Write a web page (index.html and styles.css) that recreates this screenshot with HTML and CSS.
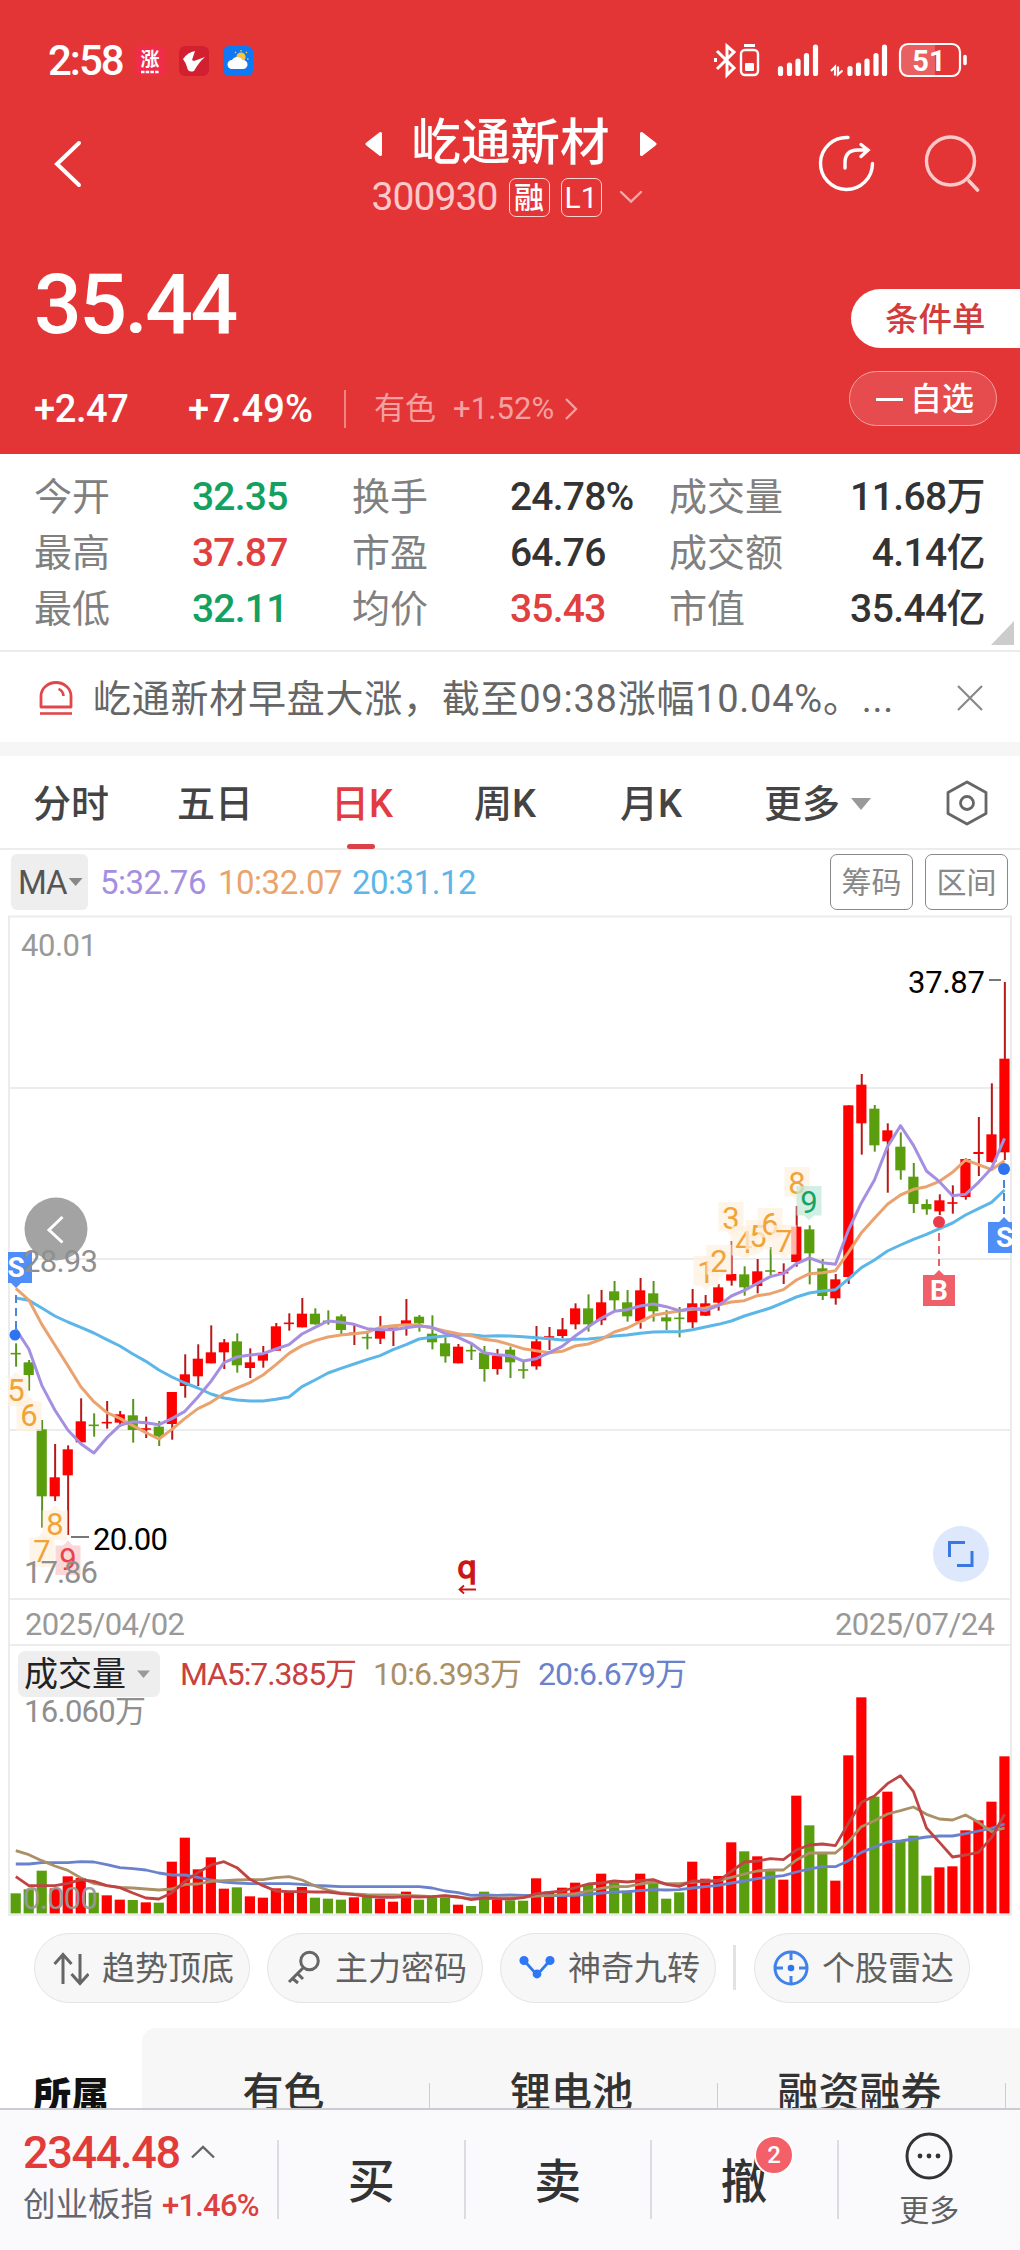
FILE: index.html
```html
<!DOCTYPE html>
<html lang="zh-CN">
<head>
<meta charset="utf-8">
<title>屹通新材 300930</title>
<link rel="stylesheet" href="styles.css">
</head>
<body>
<header class="hero">
  <div class="status">
    <span class="clock">2:58</span>
    <svg class="apps" width="120" height="32" viewBox="134 44 120 32">
      <rect x="135" y="45" width="30" height="30" rx="6" fill="#f02c48"/>
      <text x="150" y="65" font-size="19" font-weight="700" text-anchor="middle" fill="#fff">涨</text>
      <path d="M141 71h18" stroke="#fff" stroke-width="2.4" stroke-dasharray="3.5 1.2"/>
      <rect x="179" y="45" width="30" height="30" rx="6" fill="#d32030"/>
      <path d="M183 58q5-7 12-8l-3 9 2 1 11-4q-6 5-11 14-6 2-7-4-1-4-4-8z" fill="#fff"/>
      <rect x="223" y="45" width="30" height="30" rx="6" fill="#0f79f5"/>
      <circle cx="241" cy="56" r="4.6" fill="#f6c544"/>
      <path d="M241 49v1.5M247 51l-1 1M235 51l1 1M247 58h1.500" stroke="#f6c544" stroke-width="1.4"/>
      <path d="M232 68a4.500 4.500 0 0 1 0-9 6 6 0 0 1 10.500 0 4.500 4.500 0 0 1 1 9z" fill="#fff"/>
    </svg>
    <svg class="signals" width="254" height="38" viewBox="714 41 254 38" fill="none" stroke="#fff">
      <path d="M717 50l17 17-7 7V45l7 6-17 17M715.500 57v4" stroke-width="3"/>
      <path d="M744 44.500h11" stroke-width="3"/>
      <rect x="741" y="49" width="17" height="25" rx="4" stroke-width="2.4"/>
      <rect x="745" y="62" width="9" height="8" rx="1" fill="#fff" stroke="none"/>
      <path stroke-width="5.200" stroke-linecap="round" d="M780.500 67.500v5M789.500 64v8.500M798 60v12.500M806.500 54.500v18M815.500 46v26.500M850 67.500v5M858.500 64v8.500M867 60v12.500M876 54.500v18M884.500 46v26.500"/>
      <path d="M831 70l4-4v8.500M838 65.500v8l4.500-4" stroke-width="2.200"/>
      <path d="M908 43h27v32h-27a8 8 0 0 1-8-8V51a8 8 0 0 1 8-8z" fill="#ea6061" stroke="none"/>
      <rect x="900" y="43" width="60" height="32" rx="8" stroke-width="2.200"/>
      <path d="M965 55.500v7" stroke-width="3.600" stroke-linecap="round"/>
      <text x="929" y="69.500" font-size="29" font-weight="700" text-anchor="middle" fill="#fff" stroke="none">51</text>
    </svg>
  </div>

  <div class="nav">
    <svg class="back" width="30" height="50" viewBox="53 139 30 50"><path d="M79 143L57 164l22 21" fill="none" stroke="#fff" stroke-width="4" stroke-linecap="round"/></svg>
    <div class="title">
      <div class="name">
        <svg width="18" height="26" viewBox="0 0 18 26"><path d="M15.500 2.500v21L2 13z" fill="#fff" stroke="#fff" stroke-width="3" stroke-linejoin="round"/></svg>
        <h1>屹通新材</h1>
        <svg width="18" height="26" viewBox="0 0 18 26"><path d="M2.500 2.500v21L16 13z" fill="#fff" stroke="#fff" stroke-width="3" stroke-linejoin="round"/></svg>
      </div>
      <div class="code">
        <span class="num">300930</span><span class="tag">融</span><span class="tag">L1</span>
        <svg width="24" height="14" viewBox="0 0 24 14"><path d="M2 2l10 9.500L22 2" fill="none" stroke="#f7a9a9" stroke-width="2.400" stroke-linecap="round"/></svg>
      </div>
    </div>
    <svg class="actions" width="162" height="60" viewBox="818 134 162 60" fill="none" stroke-linecap="round">
      <path d="M848 137.500a26 26 0 1 0 24.500 26" stroke="#fff" stroke-width="3.400"/>
      <path d="M845 168v-5q0-13 13-13h9M861 144.500l7 5.500-7 6.500" stroke="#fff" stroke-width="3.400"/>
      <circle cx="950.500" cy="161" r="24" stroke="#fbc9c9" stroke-width="3.400"/><path d="M969 181l8.500 9" stroke="#fbc9c9" stroke-width="3.600"/>
    </svg>
  </div>

  <div class="quote">
    <span class="price">35.44</span>
    <span class="cond">条件单</span>
  </div>
  <div class="change">
    <span class="diff">+2.47</span><span class="pct">+7.49%</span>
    <span class="sector">有色 <b>+1.52%</b>
      <svg width="14" height="24" viewBox="0 0 14 24"><path d="M2 2l10 10L2 22" fill="none" stroke="#f3a0a0" stroke-width="2.400"/></svg>
    </span>
    <span class="watch"><i></i>自选</span>
  </div>
</header>

<section class="stats">
  <span class="k">今开</span><span class="v down">32.35</span><span class="k">换手</span><span class="v">24.78%</span><span class="k">成交量</span><span class="v end">11.68万</span>
  <span class="k">最高</span><span class="v up">37.87</span><span class="k">市盈</span><span class="v">64.76</span><span class="k">成交额</span><span class="v end">4.14亿</span>
  <span class="k">最低</span><span class="v down">32.11</span><span class="k">均价</span><span class="v up">35.43</span><span class="k">市值</span><span class="v end">35.44亿</span>
  <i class="corner"></i>
</section>

<section class="news">
  <svg width="34" height="36" viewBox="0 0 34 36" fill="none" stroke="#e2464c"><path d="M2 27V16a15 13.500 0 0 1 30 0v11z" stroke-width="2.800" stroke-linejoin="round"/><path d="M19.500 9q4.500 1.500 5 7" stroke-width="2.600"/><path d="M1 33.500h32" stroke-width="2.600"/></svg>
  <p>屹通新材早盘大涨，截至09:38涨幅10.04%。...</p>
  <svg class="close" width="26" height="26" viewBox="0 0 26 26"><path d="M1 1l24 24M25 1L1 25" stroke="#888" stroke-width="2.200"/></svg>
</section>

<nav class="tabs">
  <a>分时</a><a>五日</a><a class="on">日K</a><a>周K</a><a>月K</a><a>更多<i></i></a>
  <svg width="44" height="46" viewBox="0 0 44 46" fill="none" stroke="#666" stroke-width="2.800"><path d="M22 2l19 10.500v21L22 44 3 33.500v-21z" stroke-linejoin="round"/><circle cx="22" cy="23" r="6.500"/></svg>
</nav>

<div class="ma">
  <span class="pill">MA<i></i></span>
  <span class="m5">5:32.76</span><span class="m10">10:32.07</span><span class="m20">20:31.12</span>
  <span class="btn">筹码</span><span class="btn">区间</span>
</div>

<svg class="chart" width="1020" height="1010" viewBox="0 914 1020 1010">
  <defs><clipPath id="frame"><rect x="8" y="914" width="1004" height="1002"/></clipPath></defs>
  <g fill="none" stroke="#ececec" stroke-width="2">
    <path d="M9 1915V916.500H1011V1915z"/>
    <path d="M9 1088H1011M9 1259H1011M9 1430H1011M9 1599H1011M9 1645H1011"/>
  </g>
  <g id="candles"></g>
  <g id="volume"></g>

  <g class="axis">
    <text x="21" y="956" textLength="76">40.01</text>
    <text x="25" y="1634.500" textLength="160">2025/04/02</text>
    <text x="835" y="1634.500" textLength="160">2025/07/24</text>
  </g>
  <g id="counts" clip-path="url(#frame)"></g>

  <circle cx="56" cy="1229" r="31.500" fill="#a3a3a3"/>
  <path d="M62.500 1217L49 1230l13.500 12.500" fill="none" stroke="#fff" stroke-width="3"/>

  <g clip-path="url(#frame)" class="mark">
    <path d="M16 1295v36M1004 1180v34" stroke="#4a86d8" stroke-width="2" stroke-dasharray="8 5"/>
    <path d="M939 1233v33" stroke="#e8606a" stroke-width="2" stroke-dasharray="8 5"/>
    <circle cx="15" cy="1335" r="5.500" fill="#2e74f0"/><circle cx="1004" cy="1169" r="6" fill="#2e74f0"/><circle cx="939" cy="1222" r="6" fill="#ea3b48"/>
    <path d="M0 1252h32v31H21l-5 5-5-5H0z" fill="#4f8df7"/>
    <path d="M988 1222h11l5-5 5 5h10v31h-31z" fill="#4f8df7"/>
    <path d="M923 1275h11l5-5 5 5h11v31h-32z" fill="#f0606b"/>
    <text x="16" y="1277">S</text><text x="1004.500" y="1247">S</text><text x="939" y="1300">B</text>
  </g>
  <g class="axis over">
    <text x="23" y="1272" textLength="75">28.93</text>
    <text x="24" y="1583" textLength="74">17.86</text>
    <text x="24" y="1722" textLength="122">16.060万</text>
  </g>
  <g class="peak"><text x="908" y="993" textLength="77">37.87</text><text x="93" y="1550" textLength="75">20.00</text></g>
  <path d="M989 980h12M71 1537h18" stroke="#777" stroke-width="2"/>
  <text x="467" y="1578" class="ex">q</text>
  <path d="M476 1589.500h-16M464 1585.500l-4.500 4 4.500 4" fill="none" stroke="#cc1616" stroke-width="1.800"/>
  <circle cx="961" cy="1554" r="28" fill="#dde8fc"/>
  <path d="M949.500 1557v-14.500H965M972 1551v14.500h-15" fill="none" stroke="#3a78e0" stroke-width="3"/>

  <rect x="18" y="1651" width="142" height="46" rx="7" fill="#eee"/>
  <text x="24" y="1685.500" font-size="34" fill="#222">成交量</text>
  <path d="M137 1670.500h13l-6.500 7.500z" fill="#999"/>
  <g class="vol">
    <text x="180" y="1685" textLength="177" fill="#c8413f">MA5:7.385万</text>
    <text x="373" y="1685" textLength="149" fill="#ab8f66">10:6.393万</text>
    <text x="538" y="1685" textLength="149" fill="#6a82cc">20:6.679万</text>
  </g>
  <text x="23" y="1909" class="zero" textLength="75">0.000</text>
</svg>

<div class="tools">
  <span class="tool"><svg width="36" height="36" viewBox="0 0 36 36" fill="none" stroke="#666" stroke-width="3"><path d="M10 34V5M1.500 14L10 4.500 18.500 14M27 4v29M18.500 24l8.500 9.500L35.500 24"/></svg>趋势顶底</span>
  <span class="tool"><svg width="36" height="36" viewBox="0 0 36 36" fill="none" stroke="#666" stroke-width="3"><circle cx="23.500" cy="11" r="8.800"/><path d="M17.500 17.500L3 32M11 23l6 6M6 28l6 5"/></svg>主力密码</span>
  <span class="tool"><svg width="36" height="36" viewBox="0 0 36 36" fill="#2e78f5" stroke="#2e78f5" stroke-width="2.800"><path d="M5 10.500L18 25 31 10.500" fill="none"/><circle cx="5" cy="10.500" r="3.200"/><circle cx="31" cy="10.500" r="3.200"/><circle cx="18" cy="24" r="3"/></svg>神奇九转</span>
  <i class="sep"></i>
  <span class="tool"><svg width="36" height="36" viewBox="0 0 36 36" fill="none" stroke="#3f82ea" stroke-width="3"><circle cx="18" cy="18" r="16"/><path d="M18 2v8M18 26v8M2 18h8M26 18h8"/><circle cx="18" cy="18" r="3.300" fill="#2e74ea" stroke="none"/></svg>个股雷达</span>
</div>

<section class="themes">
  <strong>所属</strong>
  <div class="list"><span>有色</span><span>锂电池</span><span>融资融券</span></div>
</section>

<footer class="bar">
  <div class="index">
    <div class="pts">2344.48 <svg width="24" height="14" viewBox="0 0 24 14"><path d="M1 12.500L12 2l11 10.500" fill="none" stroke="#666" stroke-width="2.400"/></svg></div>
    <div class="idx">创业板指<b>+1.46%</b></div>
  </div>
  <div class="act">买</div><div class="act">卖</div><div class="act">撤<em>2</em></div>
  <div class="more"><svg width="48" height="48" viewBox="0 0 48 48"><circle cx="24" cy="24" r="22" fill="none" stroke="#333" stroke-width="3"/><g fill="#333"><circle cx="15" cy="24" r="2.400"/><circle cx="24" cy="24" r="2.400"/><circle cx="33" cy="24" r="2.400"/></g></svg>更多</div>
</footer>
<script src="chart.js"></script>
</body>
</html>
```
FILE: styles.css
```css
* { box-sizing: border-box; }
body { margin: 0; width: 1020px; height: 2250px; overflow: hidden; background: #fff; color: #333; font-family: Roboto, "Noto Sans CJK SC", sans-serif; font-size: 38px; line-height: 1; }
svg { display: block; flex: none; }
b, em, i { font-weight: inherit; font-style: normal; }

.hero { height: 454px; background: #e33536; color: #fff; }
.status { height: 90px; padding: 31px 52px 0 48px; display: flex; align-items: center; }
.clock { width: 86px; font-size: 42px; font-weight: 500; letter-spacing: -2px; }
.signals { margin-left: auto; }
.nav { height: 140px; display: flex; justify-content: space-between; padding: 0 40px 0 53px; }
.back { margin-top: 49px; }
.actions { margin-top: 44px; }
.title { width: 300px; margin-left: 120px; padding-top: 24px; }
.name { display: flex; align-items: center; justify-content: center; gap: 29px; height: 54px; padding-top: 6px; }
.name h1 { margin: 0; font-size: 49.500px; font-weight: 500; white-space: nowrap; }
.code { display: flex; align-items: center; height: 58px; padding-left: 11px; }
.code .num { width: 137px; font-size: 39px; color: #fbc9c9; letter-spacing: -.900px; }
.tag { width: 41px; height: 39px; margin-right: 11px; border: 1.500px solid #fbd3d3; border-radius: 7px; font-size: 30px; font-weight: 500; line-height: 37px; text-align: center; }
.tag + .tag { font-weight: 400; }
.tag + svg { margin-left: 6px; }

.quote { height: 141px; display: flex; justify-content: space-between; padding: 59px 0 0 34px; }
.price { font-size: 84px; font-weight: 500; letter-spacing: -2.500px; line-height: 32px; }
.cond { width: 169px; height: 59px; padding-left: 34px; border-radius: 30px 0 0 30px; background: #fff; color: #d23c3c; font-size: 33.500px; font-weight: 500; line-height: 61px; }
.change { display: flex; align-items: center; height: 55px; padding: 0 23px 0 34px; font-size: 38px; font-weight: 500; }
.change > span:not(.watch) { margin-top: 20px; }
.diff { width: 154px; letter-spacing: -.400px; }
.pct { width: 156px; letter-spacing: .100px; }
.sector { display: flex; align-items: center; height: 38px; padding-left: 28px; border-left: 2px solid #ed8585; color: #f3a0a0; font-size: 31px; font-weight: 400; }
.sector b { margin: 0 10px 0 17px; font-size: 31px; letter-spacing: .100px; }
.watch { width: 148px; height: 55px; margin-left: auto; display: flex; align-items: center; padding: 1px 0 0 26px; gap: 7px; border: 1.500px solid #f2a0a0; border-radius: 28px; background: #e64c4d; font-size: 32px; }
.watch i { width: 27px; height: 3px; background: #fff; }

.stats { position: relative; height: 198px; padding: 15px 35px 14px 34px; display: grid; grid-template-columns: 158px 160px 158px 159px 120px 1fr; grid-template-rows: repeat(3, 56px); line-height: 57px; border-bottom: 2px solid #ebebeb; white-space: nowrap; }
.k { color: #808080; }
.v { font-size: 39px; letter-spacing: -.800px; font-weight: 500; }
.end { text-align: right; letter-spacing: -.600px; }
.down { color: #14a05f; }
.up { color: #e04040; }
.corner { position: absolute; right: 6px; bottom: 5px; width: 23px; height: 24px; background: #ccc; clip-path: polygon(100% 0, 100% 100%, 0 100%); }

.news { height: 104px; padding: 2px 37px 0 39px; display: flex; align-items: center; border-bottom: 14px solid #f6f6f6; color: #666; }
.news p { margin: 2px 0 0 20px; white-space: nowrap; letter-spacing: .750px; }
.close { margin-left: auto; }

.tabs { height: 94px; padding: 2px 31px 0 33px; display: flex; align-items: center; border-bottom: 2px solid #ececec; font-weight: 500; color: #444; }
.tabs a { position: relative; width: 144px; padding-top: 2px; white-space: nowrap; }
.tabs a:nth-child(2) { width: 154px; }
.tabs a:nth-child(3) { width: 143px; }
.tabs a:nth-child(4) { width: 146px; }
.tabs a:nth-child(6) { width: auto; display: flex; align-items: center; gap: 11px; }
.tabs a i { width: 20px; height: 12px; background: #999; clip-path: polygon(0 0, 100% 0, 50% 100%); }
.tabs .on { color: #e33b42; }
.tabs .on::after { content: ""; position: absolute; left: 16px; top: 61px; width: 28px; height: 5px; border-radius: 3px; background: #dc4048; }
.tabs svg { margin-left: auto; }

.ma { height: 64px; padding: 4px 12px 4px 11px; display: flex; align-items: center; font-size: 33px; letter-spacing: -.500px; }
.ma .pill { width: 77px; height: 56px; margin-right: 12px; padding-left: 7px; display: flex; align-items: center; gap: 2px; border-radius: 6px; background: #eee; color: #555; letter-spacing: -1px; }
.pill i { width: 14px; height: 8px; background: #888; clip-path: polygon(0 0, 100% 0, 50% 100%); }
.m5 { width: 118px; color: #a48fe0; }
.m10 { width: 134px; color: #eaa36e; }
.m20 { color: #5cb6e8; }
.btn { width: 83px; height: 56px; margin-left: 12px; border: 1.500px solid #888; border-radius: 7px; color: #888; font-size: 30px; letter-spacing: 0; line-height: 55px; text-align: center; }
.m20 + .btn { margin-left: auto; }

.chart { font-family: Roboto, "Noto Sans CJK SC", sans-serif; }
.axis { font-size: 31px; fill: #999; }
.over { fill: #8f8f8f; }
.peak { font-size: 31px; fill: #000; }
.vol { font-size: 32px; }
.zero { font-size: 31px; fill: #999; opacity: .95; }
.mark text { font-size: 28px; font-weight: 700; fill: #fff; text-anchor: middle; }
.ex { font: 400 31px "DejaVu Sans", sans-serif; stroke: #cc1616; stroke-width: 1.500px; fill: #cc1616; text-anchor: middle; }
.count { font-size: 31px; text-anchor: middle; }

.tools { height: 104px; padding: 9px 0 0 34px; display: flex; align-items: flex-start; }
.tool { width: 216px; height: 70px; margin-right: 17px; padding-left: 18px; display: flex; align-items: center; gap: 13px; border: 1.500px solid #e4e4e4; border-radius: 35px; background: #f7f7f7; color: #606060; font-size: 33px; white-space: nowrap; }
.sep { width: 3px; height: 45px; margin: 12px 18px 0 0; background: #e2e2e2; }

.themes { height: 80px; display: flex; overflow: hidden; color: #333; font-size: 41px; font-weight: 500; }
.themes strong { width: 142px; padding: 49px 0 0 33px; font-size: 38px; font-weight: 900; color: #111; white-space: nowrap; }
.list { flex: 1; height: 100px; display: flex; padding-top: 42px; border-radius: 14px 0 0; background: #f7f7f7; line-height: 46px; text-align: center; white-space: nowrap; }
.list span { width: 288px; padding-right: 5px; background: linear-gradient(#ccc, #ccc) 100% 13px / 1.500px 60px no-repeat; }

.bar { position: relative; height: 142px; display: flex; border-top: 2px solid #ccccd0; background: #fafafc; }
.index { width: 277px; padding: 19px 0 0 23px; white-space: nowrap; color: #e23c3a; }
.pts { display: flex; align-items: center; gap: 11px; height: 46px; font-size: 45px; letter-spacing: -1.300px; font-weight: 500; }
.idx { display: flex; align-items: center; height: 60px; font-size: 32.500px; color: #66666c; }
.idx b { margin-left: 9px; font-size: 31px; letter-spacing: -.800px; color: #dc4040; font-weight: 500; }
.act { position: relative; width: 186.500px; height: 79px; margin-top: 30px; border-left: 2px solid #dcdce0; font-size: 47px; font-weight: 500; line-height: 84px; text-align: center; }
.act em { position: absolute; left: 102px; top: -5px; width: 40px; height: 40px; border: 2px solid #fff; border-radius: 50%; background: #f3606a; color: #fff; font-size: 24px; line-height: 37px; }
.more { flex: 1; height: 79px; margin-top: 30px; border-left: 2px solid #dcdce0; display: flex; flex-direction: column; align-items: center; gap: 16px; font-size: 30px; color: #606060; }
.more svg { margin-top: -8px; }
```
FILE: chart.js
```js
// All vertical values are in thirds of a pixel below the base given for the list.
const NS = 'http://www.w3.org/2000/svg';
const x = i => 15.8 + i * 13.01;
const RED = '#ff0000', GREEN = '#5a9e0e';

function add(parent, name, attrs, text) {
  const el = document.createElementNS(NS, name);
  for (const k in attrs) el.setAttribute(k, attrs[k]);
  if (text) el.textContent = text;
  parent.appendChild(el);
}

// colour, high, low, body top, body bottom; doji sessions give one body value
const early = `g430 500 461|g480 572 487 525|g660 983 688 889|r732 903 832 889|r736 1005 748 826|r595 727 664 727|g640 710 676|r603 686 668|r633 680 643 668|g597 728 646 690|r650 714 687|g663 738 680 709|r576 719 576 672|r463 593 523 558|r433 558 476 529|r376 490 457 490|r417 507 427 457|g400 518 424 496|r445 534 487 504|r438 503 460 482|r369 452 379 452|r340 392 370|r294 382 341 382|g325 374 341 373|g331 374 364|g343 402 349 390|r375 435 400|g395 448 413|r348 432 392 416|r385 438 385|r297 407 361 373|g345 395 350 370|g346 448 401 427|g412 488 430 469|r432 490 440 490|g430 480 452|g438 545 458 507|r447 524 467 507|g440 534 449 487|g485 536 510|r378 509 424 499|r381 450 411|r354 415 388 408|r310 388 325 373|g283 395 325 373|r270 375 307 361|g243 333 274 301|g270 365 307 349|r234 386 271 364|g243 365 280 334|g330 390 352 364|g321 412 355`;
const late = `r987 1104 1030 1087|r1005 1068 1030 1067|r972 1052 982 1028|r843 977 942 962|g919 1007 943 982|r897 1000 934 978|g861 945 933|r910 972 938|r738 920 800 906|g796 973 808 880|g897 1020 925 1008|r942 1034 958 1015|r436 972 436 951|r342 584 374 490|g435 575 446 556|r490 698 511 544|g517 659 560 631|g609 759 650 732|g718 764 732 748|r703 765 721 754|r676 761 729|r595 719 597 711|r471 648 576 582|r370 608 523 606|r66 600 296 577`;
const parse = (s, base) => s.split('|').map(row => ({
  up: row[0] === 'r',
  y: row.slice(1).split(' ').map(v => base + v / 3)
}));
const sessions = parse(early, 1200).concat(parse(late, 960));
const candles = document.getElementById('candles');
sessions.forEach(({ up, y }, i) => {
  add(candles, 'path', { d: `M${x(i) + .3} ${y[0]}V${y[1]}`, stroke: up ? '#b81818' : '#5a9420', 'stroke-width': 2 });
  const top = y.length > 3 ? y[2] : y[2] - .8;
  const h = y.length > 3 ? Math.max(y[3] - y[2], 1.5) : 1.6;
  add(candles, 'rect', { x: x(i) - 5.2, y: top, width: 10.2, height: h, fill: up ? RED : GREEN });
});

function line(parent, y, color, width) {
  add(parent, 'polyline', { points: y.map((v, i) => x(i) + ',' + v).join(' '), fill: 'none', stroke: color, 'stroke-width': width, 'stroke-linejoin': 'round' });
}
const px = (list, base) => list.map(v => base + v / 3);

line(candles, px([294,301,324,348,366,382,399,419,438,462,484,510,531,549,564,582,594,600,603,603,598,591,560,540,519,505,492,479,467,449,434,417,412,408,405,404,409,407,408,410,413,416,420,418,417,413,408,405,400,396,395,395], 1200)
  .concat(px([1109,1101,1093,1083,1068,1056,1044,1028,1011,999,993,989,957,923,900,873,855,838,823,806,789,765,746,727,690], 960)), '#5cb6e8', 3);
line(candles, px([265,300,373,435,497,560,605,638,655,677,698,717,688,655,626,607,581,564,548,525,494,460,437,422,411,405,401,397,382,377,374,376,384,393,401,407,418,423,434,446,452,458,454,438,432,418,396,384,365,346,339,333], 1200)
  .concat(px([1048,1044,1035,1026,1022,1007,1001,989,960,941,938,932,877,818,775,733,705,688,680,664,637,600,614,629,602], 960)), '#eaa36e', 3);
line(candles, px([387,447,556,630,690,731,759,713,676,665,668,674,656,634,591,544,488,471,465,461,447,434,402,382,363,367,373,386,389,389,383,378,382,400,412,430,458,464,467,483,476,458,439,408,380,355,334,329,318,312,320,332], 1200)
  .concat(px([1045,1052,1037,1008,991,970,950,940,911,894,908,913,810,728,660,560,497,556,633,665,707,703,667,625,535], 960)), '#a48fe0', 3);

const volume = document.getElementById('volume');
px([910,898,842,895,859,864,908,916,929,930,937,938,815,743,838,802,896,892,919,923,895,903,891,923,926,929,922,921,926,935,905,929,924,922,944,948,905,930,931,932,865,905,893,878,882,851,877,902,851,878,926,907,815,866,858,757,784,799,843,869,617,706,790,872,496,322,620,605,752,737,857,832,829,721,691,635,499], 1590)
  .forEach((y, i) => add(volume, 'rect', { x: x(i) - 5.2, y, width: 10.2, height: 1913.4 - y, fill: sessions[i].up ? RED : GREEN }));
line(volume, px([822,822,818,818,818,815,816,824,833,836,840,849,855,855,862,870,876,879,881,881,881,881,883,886,888,890,890,890,890,890,890,890,894,903,908,916,915,916,915,916,917,917,917,916,913,909,906,905,902,899,900,899,894,890,886,879,873,866,861,857,846,837,830,830,812,787,771,756,753,747,741,738,738,731,723,715,702], 1590), '#6a82cc', 2.8);
line(volume, px([782,794,812,828,841,864,880,887,892,894,897,900,897,883,882,874,872,870,869,869,863,860,870,888,900,909,912,914,915,915,916,918,920,918,921,926,923,924,924,922,918,917,914,911,903,895,889,890,882,876,881,881,877,873,872,862,852,843,840,840,810,789,789,789,755,710,692,672,662,651,673,687,690,675,697,725,714], 1590), '#ab8f66', 2.8);
line(volume, px([860,887,887,887,880,869,874,887,893,909,924,927,908,874,848,825,815,833,868,887,903,905,905,906,906,911,914,919,922,922,920,921,920,917,921,929,924,926,927,923,911,907,903,893,882,879,873,876,872,869,883,889,873,874,873,844,816,813,806,809,780,765,762,767,700,637,618,581,557,605,714,757,801,795,787,743,673], 1590), '#c04444', 2.8);

// numbered sequence flags: digit, centre x, centre y, tip direction
const counts = document.getElementById('counts');
[[5,16,1390,-1],[6,29,1415,-1],[7,42,1551,-1],[8,55,1524,-1],[9,68,1559,-1,'r'],
 [1,706,1272,1],[2,719,1261,1],[3,731,1218,1],[4,744,1242,1],[5,758,1236,1],[6,770,1224,1],[7,784,1241,1],[8,797,1183,1],[9,809,1202,1,'g']]
  .forEach(([n, cx, cy, dir, kind]) => {
    const fill = kind === 'r' ? '#fbc9cb' : kind === 'g' ? '#c4eadb' : '#fdf0df';
    const ink = kind === 'r' ? '#e8434c' : kind === 'g' ? '#12a567' : '#f0a338';
    const w = 12.5, a = cy - dir * 16, b = cy + dir * 13.5;
    add(counts, 'path', { d: `M${cx - w} ${a}H${cx + w}V${b}H${cx + 5}L${cx} ${b + dir * 5}L${cx - 5} ${b}H${cx - w}z`, fill, 'fill-opacity': .75 });
    add(counts, 'text', { class: 'count', x: cx, y: cy + 11, fill: ink }, String(n));
  });
```
